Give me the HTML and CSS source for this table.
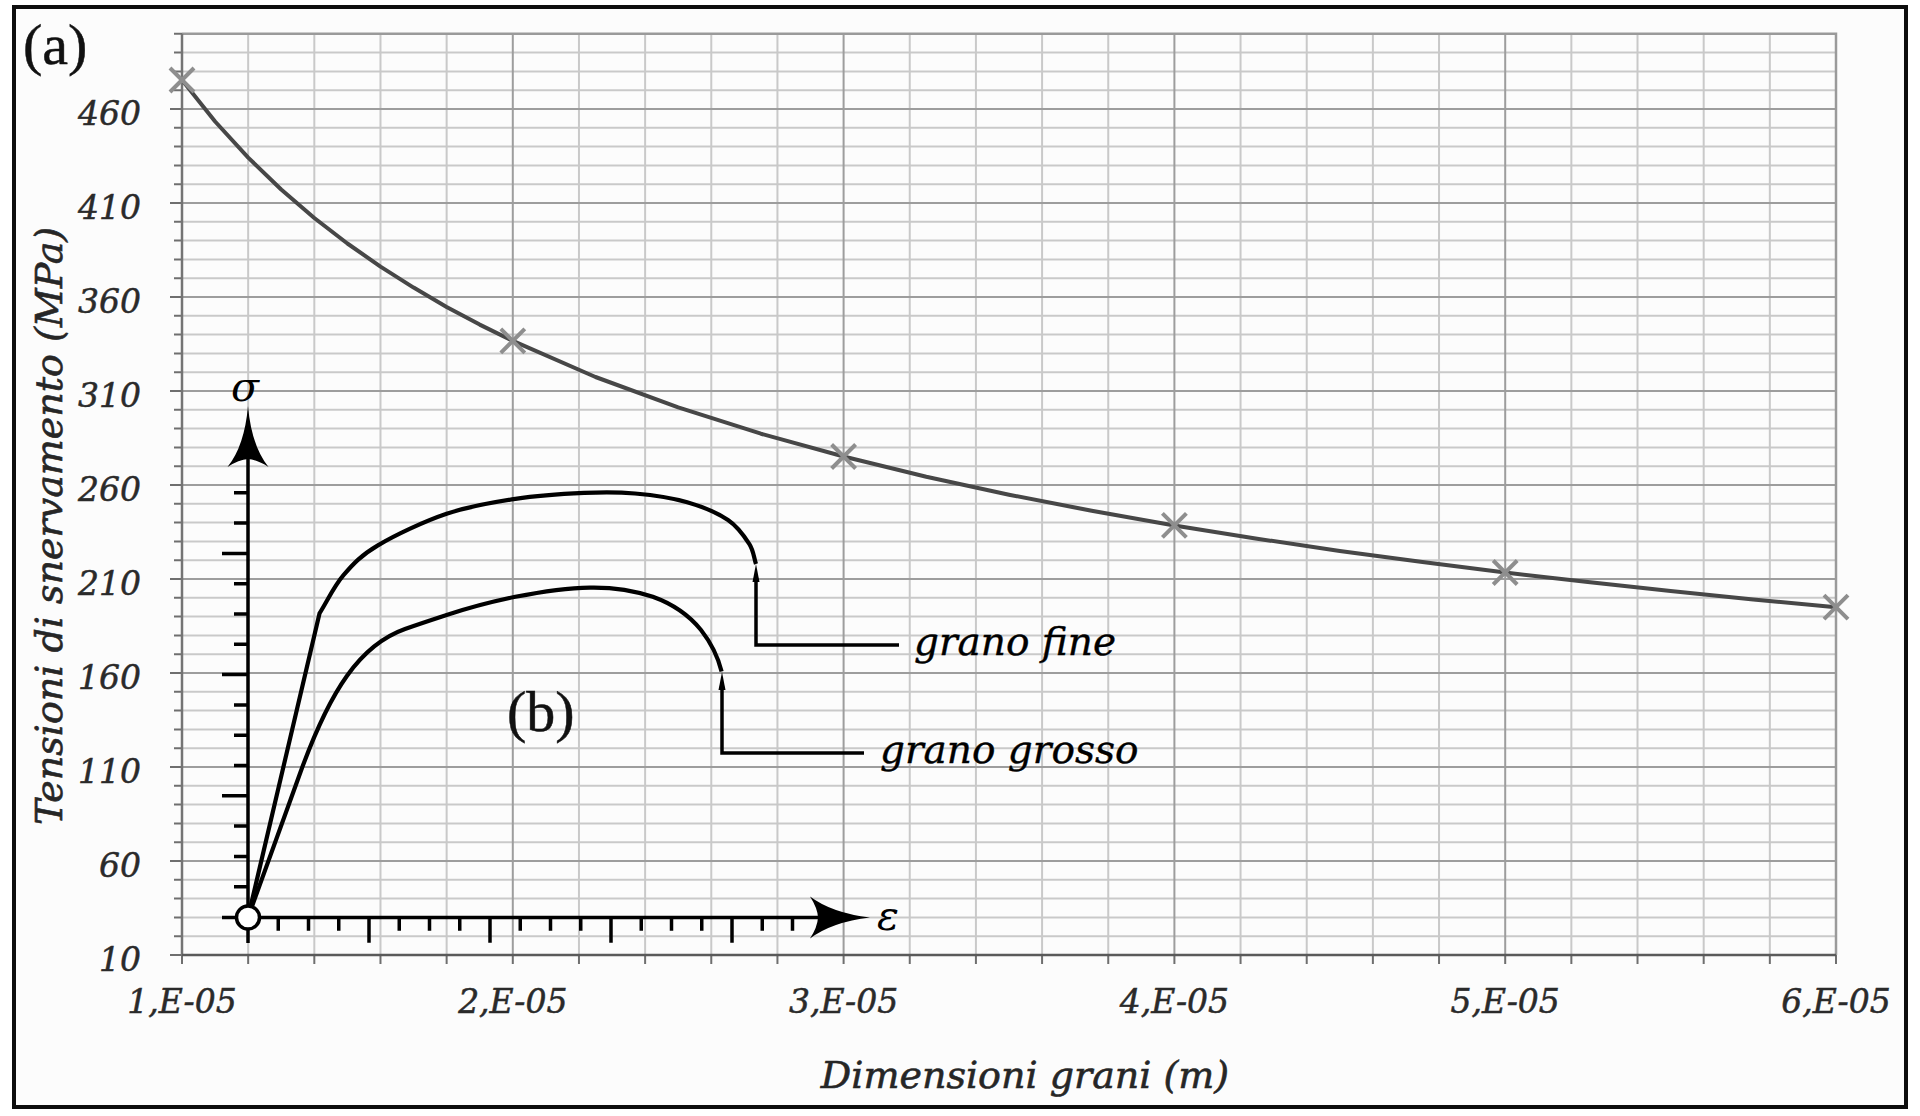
FILE: index.html
```html
<!DOCTYPE html>
<html lang="it">
<head>
<meta charset="utf-8">
<title>Tensioni di snervamento vs dimensioni grani</title>
<link rel="stylesheet" href="styles.css">
</head>
<body>
<div class="page">
  <figure class="figure">
    <svg class="chart" width="1888" height="1096" viewBox="16 9 1888 1096" xmlns="http://www.w3.org/2000/svg">
      <!-- grid -->
      <path class="grid-minor" d="M182 936.2H1836M182 917.4H1836M182 898.6H1836M182 879.8H1836M182 842.2H1836M182 823.4H1836M182 804.6H1836M182 785.8H1836M182 748.2H1836M182 729.4H1836M182 710.6H1836M182 691.8H1836M182 654.2H1836M182 635.4H1836M182 616.6H1836M182 597.8H1836M182 560.2H1836M182 541.4H1836M182 522.6H1836M182 503.8H1836M182 466.2H1836M182 447.4H1836M182 428.6H1836M182 409.8H1836M182 372.2H1836M182 353.4H1836M182 334.6H1836M182 315.8H1836M182 278.2H1836M182 259.4H1836M182 240.6H1836M182 221.8H1836M182 184.2H1836M182 165.4H1836M182 146.6H1836M182 127.8H1836M182 90.2H1836M182 71.4H1836M182 52.6H1836"/>
      <path class="grid-minor" d="M248.16 33.8V955M314.32 33.8V955M380.48 33.8V955M446.64 33.8V955M578.96 33.8V955M645.12 33.8V955M711.28 33.8V955M777.44 33.8V955M909.76 33.8V955M975.92 33.8V955M1042.08 33.8V955M1108.24 33.8V955M1240.56 33.8V955M1306.72 33.8V955M1372.88 33.8V955M1439.04 33.8V955M1571.36 33.8V955M1637.52 33.8V955M1703.68 33.8V955M1769.84 33.8V955"/>
      <path class="grid-major" d="M182 861H1836M182 767H1836M182 673H1836M182 579H1836M182 485H1836M182 391H1836M182 297H1836M182 203H1836M182 109H1836"/>
      <path class="grid-major" d="M512.8 33.8V955M843.6 33.8V955M1174.4 33.8V955M1505.2 33.8V955"/>
      <path class="frame-line" d="M182 33.8H1836V955"/>
      <!-- axes -->
      <path class="tick" d="M174 936.2H182M174 917.4H182M174 898.6H182M174 879.8H182M174 842.2H182M174 823.4H182M174 804.6H182M174 785.8H182M174 748.2H182M174 729.4H182M174 710.6H182M174 691.8H182M174 654.2H182M174 635.4H182M174 616.6H182M174 597.8H182M174 560.2H182M174 541.4H182M174 522.6H182M174 503.8H182M174 466.2H182M174 447.4H182M174 428.6H182M174 409.8H182M174 372.2H182M174 353.4H182M174 334.6H182M174 315.8H182M174 278.2H182M174 259.4H182M174 240.6H182M174 221.8H182M174 184.2H182M174 165.4H182M174 146.6H182M174 127.8H182M174 90.2H182M174 71.4H182M174 52.6H182M174 33.8H182M170 955H182M170 861H182M170 767H182M170 673H182M170 579H182M170 485H182M170 391H182M170 297H182M170 203H182M170 109H182"/>
      <path class="tick" d="M182 955V964M248.16 955V964M314.32 955V964M380.48 955V964M446.64 955V964M512.8 955V964M578.96 955V964M645.12 955V964M711.28 955V964M777.44 955V964M843.6 955V964M909.76 955V964M975.92 955V964M1042.08 955V964M1108.24 955V964M1174.4 955V964M1240.56 955V964M1306.72 955V964M1372.88 955V964M1439.04 955V964M1505.2 955V964M1571.36 955V964M1637.52 955V964M1703.68 955V964M1769.84 955V964M1836 955V964"/>
      <path class="axis-y" d="M182 33.8V955"/>
      <path class="axis-x" d="M182 955H1836"/>

      <!-- tick labels -->
      <g class="tick-label tick-label--y">
        <text x="141" y="970.5">10</text>
        <text x="141" y="876.5">60</text>
        <text x="141" y="782.5">110</text>
        <text x="141" y="688.5">160</text>
        <text x="141" y="594.5">210</text>
        <text x="141" y="500.5">260</text>
        <text x="141" y="406.5">310</text>
        <text x="141" y="312.5">360</text>
        <text x="141" y="218.5">410</text>
        <text x="141" y="124.5">460</text>
      </g>
      <g class="tick-label tick-label--x">
        <text x="182" y="1013">1,E-05</text>
        <text x="512.8" y="1013">2,E-05</text>
        <text x="843.6" y="1013">3,E-05</text>
        <text x="1174.4" y="1013">4,E-05</text>
        <text x="1505.2" y="1013">5,E-05</text>
        <text x="1836" y="1013">6,E-05</text>
      </g>
      <text class="axis-title axis-title--x" x="1025" y="1088">Dimensioni grani (m)</text>
      <text class="axis-title axis-title--y" transform="translate(62 526) rotate(-90)">Tensioni di snervamento (MPa)</text>
      <text class="panel-label" x="23" y="64">(a)</text>

      <!-- data series -->
      <polyline class="series" points="182,80 215.1,121.5 248.2,157.6 281.2,189.5 314.3,218 347.4,243.5 380.5,266.6 413.6,287.6 446.6,306.9 479.7,324.6 512.8,340.9 595.5,377 678.2,407.4 760.9,433.7 843.6,456.5 926.3,476.7 1009,494.7 1091.7,510.8 1174.4,525.45 1257.1,538.7 1339.8,550.9 1422.5,562.1 1505.2,572.5 1587.9,582.1 1670.6,591 1753.3,599.4 1836,607.2"/>
      <path class="marker" d="M170 68L194 92M194 68L170 92"/>
      <path class="marker" d="M500.8 328.9L524.8 352.9M524.8 328.9L500.8 352.9"/>
      <path class="marker" d="M831.6 444.5L855.6 468.5M855.6 444.5L831.6 468.5"/>
      <path class="marker" d="M1162.4 513.45L1186.4 537.45M1186.4 513.45L1162.4 537.45"/>
      <path class="marker" d="M1493.2 560.5L1517.2 584.5M1517.2 560.5L1493.2 584.5"/>
      <path class="marker" d="M1824 595.2L1848 619.2M1848 595.2L1824 619.2"/>

      <!-- inset (b): stress-strain diagram -->
      <g class="inset">
        <path class="ink" d="M248 917.5V458"/>
        <path class="ink-fill" d="M248 406Q251.5 446 268.5 467Q257 459.5 248 459Q239 459.5 227.5 467Q244.5 446 248 406Z"/>
        <path class="ink" d="M248 917.5H818"/>
        <path class="ink-fill" d="M870 917.5Q832 913 810 896.5Q817.5 908 818 917.5Q817.5 927 810 938.5Q832 922 870 917.5Z"/>
        <path class="ink-tick" d="M234 886.7H248M234 856.4H248M234 826.1H248M222 795.8H248M234 765.5H248M234 735.2H248M234 704.9H248M222 674.6H248M234 644.3H248M234 614H248M234 583.7H248M222 553.4H248M234 523.1H248M234 492.8H248M222 917.5H248"/>
        <path class="ink-tick" d="M278.25 917.5V930.7M308.5 917.5V930.7M338.75 917.5V930.7M369 917.5V942.7M399.25 917.5V930.7M429.5 917.5V930.7M459.75 917.5V930.7M490 917.5V942.7M520.25 917.5V930.7M550.5 917.5V930.7M580.75 917.5V930.7M611 917.5V942.7M641.25 917.5V930.7M671.5 917.5V930.7M701.75 917.5V930.7M732 917.5V942.7M762.25 917.5V930.7M792.5 917.5V930.7M248 917.5V943"/>
        <path class="ink curve" d="M248 917.5L319.5 613.4C327.5 600.7 333.8 586.5 343.5 575.2C353.2 563.9 360.7 555.6 377.9 545.4C395.1 535.2 423.7 521.55 446.6 513.8C469.5 506.05 492.5 502.4 515.4 498.9C538.3 495.4 564.2 493.8 584.1 492.9C604 492 617.8 491.95 635 493.5C652.2 495.05 671.7 497.8 687.2 502.2C702.7 506.6 717.7 513.1 728 520C738.3 526.9 744.4 536.4 749.1 543.7C753.8 551 753.7 557.4 756 564"/>
        <path class="ink curve" d="M248 917.5L300 773.5C330 690 360 645 405 629C419 624 425.2 622 446.6 615C468 608 492 601.5 515.4 596.8C540 592 568 588 590 587.6C612 587.2 634 590.5 652.8 596.8C670 603 688 614 701 630C712 644 718 657 721.6 671.5"/>
        <path class="ink leader" d="M756 578V645H899"/>
        <path class="ink-fill" d="M756 564L759.5 582H752.5Z"/>
        <path class="ink leader" d="M722 686V753H864"/>
        <path class="ink-fill" d="M722 672L725.5 690H718.5Z"/>
        <circle class="origin" cx="248" cy="917.5" r="11.5"/>
        <text class="symbol" x="231" y="401">σ</text>
        <text class="symbol" x="877" y="930">ε</text>
        <text class="panel-label" x="507" y="731">(b)</text>
        <text class="curve-label" x="914" y="655">grano fine</text>
        <text class="curve-label" x="880" y="763">grano grosso</text>
      </g>
    </svg>
  </figure>
</div>
</body>
</html>
```
FILE: styles.css
```css
html, body {
  margin: 0;
  padding: 0;
  background: #ffffff;
}

body {
  width: 1920px;
  height: 1116px;
  overflow: hidden;
  font-family: "DejaVu Serif", "Liberation Serif", serif;
}

.page {
  padding: 5px 0 0 12px;
}

.figure {
  margin: 0;
  width: 1896px;
  height: 1104px;
  box-sizing: border-box;
  border: 4px solid #0d0d0d;
  background: #fcfcfc;
}

.chart {
  display: block;
}

.grid-minor {
  fill: none;
  stroke: #c9c9c9;
  stroke-width: 2;
}

.grid-major {
  fill: none;
  stroke: #9d9d9d;
  stroke-width: 2;
}

.frame-line {
  fill: none;
  stroke: #9a9a9a;
  stroke-width: 2.5;
}

.tick {
  fill: none;
  stroke: #6f6f6f;
  stroke-width: 2;
}

.axis-y {
  fill: none;
  stroke: #747474;
  stroke-width: 2.5;
}

.axis-x {
  fill: none;
  stroke: #5a5a5a;
  stroke-width: 2.5;
}

.tick-label {
  font-family: "DejaVu Serif", "Liberation Serif", serif;
  font-style: italic;
  font-size: 33px;
  fill: #2a2a2a;
  stroke: #2a2a2a;
  stroke-width: 0.5;
}

.tick-label--y {
  text-anchor: end;
}

.tick-label--x {
  text-anchor: middle;
}

.axis-title {
  font-family: "DejaVu Serif", "Liberation Serif", serif;
  font-style: italic;
  font-size: 38px;
  fill: #262626;
  stroke: #262626;
  stroke-width: 0.6;
  text-anchor: middle;
}

.panel-label {
  font-family: "Liberation Serif", "DejaVu Serif", serif;
  font-size: 58px;
  fill: #111111;
  stroke: #111111;
  stroke-width: 0.5;
}

.series {
  fill: none;
  stroke: #474747;
  stroke-width: 4;
  stroke-linejoin: round;
  stroke-linecap: round;
}

.marker {
  fill: none;
  stroke: #8e8e8e;
  stroke-width: 4;
}

.ink {
  fill: none;
  stroke: #000000;
  stroke-width: 3.5;
}

.curve {
  stroke-width: 4.2;
  stroke-linejoin: round;
}

.leader {
  stroke-width: 3.5;
}

.ink-fill {
  fill: #000000;
  stroke: none;
}

.ink-tick {
  fill: none;
  stroke: #000000;
  stroke-width: 3.5;
}

.origin {
  fill: #ffffff;
  stroke: #000000;
  stroke-width: 3.5;
}

.symbol {
  font-family: "DejaVu Serif", "Liberation Serif", serif;
  font-style: italic;
  font-size: 41px;
  fill: #000000;
}

.curve-label {
  font-family: "DejaVu Serif", "Liberation Serif", serif;
  font-style: italic;
  font-size: 39px;
  fill: #000000;
  stroke: #000000;
  stroke-width: 0.4;
}
```
